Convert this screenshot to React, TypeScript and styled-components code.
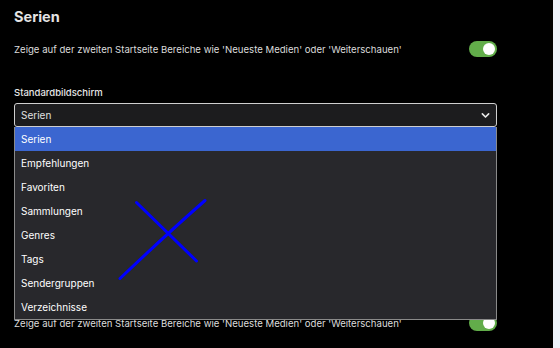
import styled, { createGlobalStyle } from "styled-components";

const GlobalStyle = createGlobalStyle`
  html, body {
    margin: 0;
    padding: 0;
    background: #000;
  }
  body {
    font-family: Inter, "Noto Sans", sans-serif;
    color: #e2e2e2;
  }
`;

const Page = styled.div`
  display: flex;
  width: 560px;
  height: 348px;
  overflow: hidden;
`;

const Main = styled.div`
  position: relative;
  flex: 1;
  background: #000;
  padding: 6px 56px 0 14px;
`;

const SideStrip = styled.div`
  width: 7px;
  background: #eef2fa;
`;

const Title = styled.h2`
  margin: 0;
  font-size: 14.5px;
  line-height: 22px;
  font-weight: 700;
  color: #e4e4e4;
`;

const SettingRow = styled.div<{ top: number }>`
  display: flex;
  align-items: center;
  justify-content: space-between;
  height: 16px;
  margin-top: ${(p) => p.top}px;
`;

const Description = styled.span`
  font-size: 9.6px;
  color: #dcdcdc;
`;

const Toggle = styled.div`
  position: relative;
  width: 28px;
  height: 16px;
  border-radius: 8px;
  background: #62ad4a;
  &::after {
    content: "";
    position: absolute;
    top: 2px;
    right: 2px;
    width: 12px;
    height: 12px;
    border-radius: 50%;
    background: #fff;
  }
`;

const Label = styled.div`
  margin-top: 29px;
  font-size: 9.5px;
  line-height: 14px;
  font-weight: 500;
  color: #e6e6e6;
`;

const SelectWrap = styled.div`
  position: relative;
  margin-top: 3px;
`;

const SelectBox = styled.div`
  display: flex;
  align-items: center;
  justify-content: space-between;
  height: 22px;
  padding: 0 6px;
  border: 1px solid #cfcfcf;
  border-radius: 3px;
  background: #1c1c1e;
  font-size: 10px;
  color: #e0e0e0;
`;

const Chevron = styled.svg`
  width: 9px;
  height: 9px;
`;

const Dropdown = styled.ul`
  position: absolute;
  top: 24px;
  left: 0;
  right: 0;
  margin: 0;
  padding: 0;
  list-style: none;
  background: #28282c;
  border: 1px solid #8a8a8a;
  border-top: none;
  z-index: 2;
`;

const Option = styled.li<{ active?: boolean }>`
  height: 24px;
  line-height: 24px;
  padding-left: 6px;
  font-size: 10px;
  color: #fff;
  background: ${(p) => (p.active ? "#3b66d0" : "transparent")};
`;

const Scribble = styled.svg`
  position: absolute;
  left: 0;
  top: 0;
  width: 553px;
  height: 348px;
  pointer-events: none;
  z-index: 3;
`;

const options = [
  "Serien",
  "Empfehlungen",
  "Favoriten",
  "Sammlungen",
  "Genres",
  "Tags",
  "Sendergruppen",
  "Verzeichnisse",
];

const desc =
  "Zeige auf der zweiten Startseite Bereiche wie 'Neueste Medien' oder 'Weiterschauen'";

function App() {
  return (
    <Page>
      <GlobalStyle />
      <Main>
        <Title>Serien</Title>
        <SettingRow top={13}>
          <Description>{desc}</Description>
          <Toggle />
        </SettingRow>
        <Label>Standardbildschirm</Label>
        <SelectWrap>
          <SelectBox>
            <span>Serien</span>
            <Chevron viewBox="0 0 10 10">
              <path
                d="M1.5 3.2 L5 6.7 L8.5 3.2"
                fill="none"
                stroke="#e8e8e8"
                strokeWidth="1.8"
                strokeLinecap="round"
                strokeLinejoin="round"
              />
            </Chevron>
          </SelectBox>
          <Dropdown>
            {options.map((o, i) => (
              <Option key={o} active={i === 0}>
                {o}
              </Option>
            ))}
          </Dropdown>
        </SelectWrap>
        <SettingRow top={188}>
          <Description>{desc}</Description>
          <Toggle />
        </SettingRow>
        <Scribble viewBox="0 0 553 348">
          <path
            d="M136.5 202.5 L196.5 261"
            stroke="#0000ff"
            strokeWidth="3"
            strokeLinecap="round"
            fill="none"
          />
          <path
            d="M205 200.5 Q170 231 120 278.5"
            stroke="#0000ff"
            strokeWidth="3"
            strokeLinecap="round"
            fill="none"
          />
        </Scribble>
      </Main>
      <SideStrip />
    </Page>
  );
}

export default App;
